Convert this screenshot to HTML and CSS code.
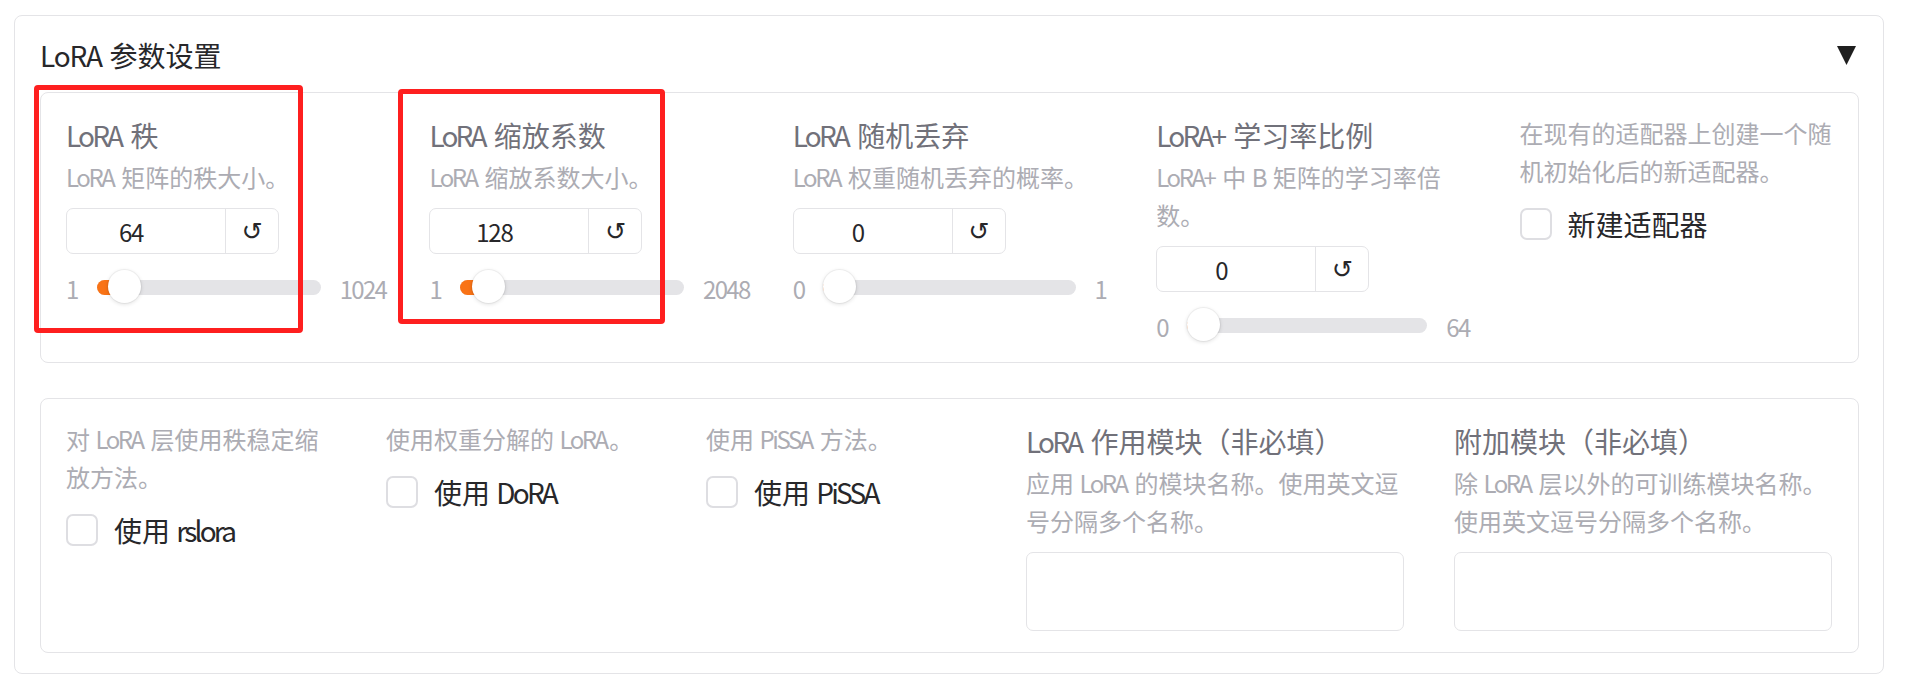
FILE: index.html
```html
<!DOCTYPE html>
<html lang="zh-CN">
<head>
<meta charset="utf-8">
<title>LoRA 参数设置</title>
<link rel="stylesheet" href="styles.css">
</head>
<body>
<div class="page">
  <div class="accordion">
    <div class="acc-head">
      <span class="acc-title"><span class="en-t">LoRA</span> 参数设置</span>
      <svg class="caret" viewBox="0 0 19 19" aria-hidden="true"><polygon points="0,0 19,0 9.5,19" fill="#1f1f1f"/></svg>
    </div>

    <div class="group">
      <div class="row row-a">
        <div class="field">
          <div class="label"><span class="en">LoRA</span> 秩</div>
          <div class="info"><span class="en">LoRA</span> 矩阵的秩大小。</div>
          <div class="num"><span class="num-val">64</span><span class="reset">↺</span></div>
          <div class="slider">
            <span class="lim">1</span>
            <div class="track" style="--p:0.0616"><div class="fill"></div><div class="thumb"></div></div>
            <span class="lim">1024</span>
          </div>
        </div>
        <div class="field">
          <div class="label"><span class="en">LoRA</span> 缩放系数</div>
          <div class="info"><span class="en">LoRA</span> 缩放系数大小。</div>
          <div class="num"><span class="num-val">128</span><span class="reset">↺</span></div>
          <div class="slider">
            <span class="lim">1</span>
            <div class="track" style="--p:0.062"><div class="fill"></div><div class="thumb"></div></div>
            <span class="lim">2048</span>
          </div>
        </div>
        <div class="field">
          <div class="label"><span class="en">LoRA</span> 随机丢弃</div>
          <div class="info"><span class="en">LoRA</span> 权重随机丢弃的概率。</div>
          <div class="num"><span class="num-val">0</span><span class="reset">↺</span></div>
          <div class="slider">
            <span class="lim">0</span>
            <div class="track" style="--p:0"><div class="fill"></div><div class="thumb"></div></div>
            <span class="lim">1</span>
          </div>
        </div>
        <div class="field">
          <div class="label"><span class="en">LoRA+</span> 学习率比例</div>
          <div class="info"><span class="en">LoRA+</span> 中 <span class="en">B</span> 矩阵的学习率倍数。</div>
          <div class="num"><span class="num-val">0</span><span class="reset">↺</span></div>
          <div class="slider">
            <span class="lim">0</span>
            <div class="track" style="--p:0"><div class="fill"></div><div class="thumb"></div></div>
            <span class="lim">64</span>
          </div>
        </div>
        <div class="field">
          <div class="info">在现有的适配器上创建一个随机初始化后的新适配器。</div>
          <label class="check"><span class="box"></span><span class="check-label">新建适配器</span></label>
        </div>
      </div>
    </div>

    <div class="group group-b">
      <div class="row row-b">
        <div class="field">
          <div class="info">对 <span class="en">LoRA</span> 层使用秩稳定缩放方法。</div>
          <label class="check"><span class="box"></span><span class="check-label">使用 <span class="en">rslora</span></span></label>
        </div>
        <div class="field">
          <div class="info">使用权重分解的 <span class="en">LoRA</span>。</div>
          <label class="check"><span class="box"></span><span class="check-label">使用 <span class="en">DoRA</span></span></label>
        </div>
        <div class="field">
          <div class="info">使用 <span class="en">PiSSA</span> 方法。</div>
          <label class="check"><span class="box"></span><span class="check-label">使用 <span class="en">PiSSA</span></span></label>
        </div>
        <div class="field">
          <div class="label"><span class="en">LoRA</span> 作用模块（非必填）</div>
          <div class="info">应用 <span class="en">LoRA</span> 的模块名称。使用英文逗号分隔多个名称。</div>
          <div class="textbox"></div>
        </div>
        <div class="field">
          <div class="label">附加模块（非必填）</div>
          <div class="info">除 <span class="en">LoRA</span> 层以外的可训练模块名称。使用英文逗号分隔多个名称。</div>
          <div class="textbox"></div>
        </div>
      </div>
    </div>
  </div>

  <div class="mark mark-1"></div>
  <div class="mark mark-2"></div>
</div>
</body>
</html>
```

FILE: styles.css
```css
html, body {
  margin: 0;
  padding: 0;
  background: #ffffff;
}

body {
  font-family: "Noto Sans CJK SC", "Noto Sans", "DejaVu Sans", sans-serif;
  color: #27272a;
}

.page {
  position: relative;
  padding: 15px 0 0 14px;
}

.en {
  letter-spacing: -0.1em;
  padding-right: 0.1em;
}

.en-t {
  letter-spacing: -0.04em;
  padding-right: 0.04em;
}

.accordion {
  width: 1870px;
  box-sizing: border-box;
  border: 1px solid #e4e4e7;
  border-radius: 8px;
  padding: 18px 24px 20px 25px;
}

.acc-head {
  display: flex;
  align-items: center;
  justify-content: space-between;
  height: 42px;
  margin-bottom: 16px;
}

.acc-title {
  font-size: 28px;
  line-height: 42px;
  color: #27272a;
}

.caret {
  width: 19px;
  height: 19px;
  margin-right: 3px;
  margin-top: 1px;
}

.group {
  border: 1px solid #e4e4e7;
  border-radius: 8px;
  padding: 21px 25px 20px 25px;
}

.group + .group {
  margin-top: 35px;
}

.group-b {
  padding-bottom: 21px;
}

.row {
  display: grid;
  column-gap: 50px;
  align-items: start;
}

.row-a {
  grid-template-columns: repeat(5, minmax(0, 1fr));
}

.row-b {
  grid-template-columns: 270px 270px 270px 378px 378px;
}

.field {
  min-width: 0;
}

.label {
  font-size: 28px;
  line-height: 42px;
  color: #71717a;
}

.info {
  font-size: 24px;
  line-height: 38px;
  color: #acacb3;
  margin-top: 2px;
}

.field > .info:first-child {
  margin-top: 0;
}

.num {
  display: flex;
  width: 213px;
  height: 46px;
  box-sizing: border-box;
  border: 1px solid #e4e4e7;
  border-radius: 7px;
  margin-top: 12px;
}

.num-val {
  flex: 0 0 159px;
  box-sizing: border-box;
  padding-right: 30px;
  display: flex;
  align-items: center;
  justify-content: center;
  font-size: 24px;
  letter-spacing: -0.05em;
  color: #27272a;
  border-right: 1px solid #e4e4e7;
}

.reset {
  flex: 1;
  display: flex;
  align-items: center;
  justify-content: center;
  font-family: "DejaVu Sans", sans-serif;
  font-size: 25px;
  line-height: 1;
  color: #27272a;
}

.slider {
  display: flex;
  align-items: center;
  gap: 19px;
  height: 33px;
  margin-top: 17px;
}

.lim {
  font-size: 24px;
  line-height: 1;
  letter-spacing: -0.07em;
  color: #acacb3;
  flex: 0 0 auto;
  margin-top: 3px;
}

.track {
  position: relative;
  flex: 1 0 224px;
  height: 15px;
  background: #e4e4e7;
  border-radius: 8px;
}

.fill {
  position: absolute;
  left: 0;
  top: 0;
  bottom: 0;
  width: calc((100% - 33px) * var(--p) + 16.5px);
  background: #f97316;
  border-radius: 8px 0 0 8px;
}

.thumb {
  position: absolute;
  top: 50%;
  left: calc((100% - 33px) * var(--p));
  width: 33px;
  height: 33px;
  margin-top: -17.5px;
  border-radius: 50%;
  background: #ffffff;
  box-shadow: 0 0 0 1px rgba(0, 0, 0, 0.04), 0 1px 4px rgba(0, 0, 0, 0.14);
}

.check {
  display: flex;
  align-items: center;
  gap: 16px;
  height: 42px;
  margin-top: 13px;
}

.box {
  width: 32px;
  height: 32px;
  box-sizing: border-box;
  border: 2px solid #dedee2;
  border-radius: 7px;
  background: #ffffff;
  flex: 0 0 auto;
}

.check-label {
  font-size: 28px;
  line-height: 42px;
  color: #27272a;
}

.textbox {
  margin-top: 12px;
  height: 79px;
  box-sizing: border-box;
  border: 1px solid #e4e4e7;
  border-radius: 7px;
  background: #ffffff;
}

.mark {
  position: absolute;
  box-sizing: border-box;
  border: 5px solid #fe1f1f;
  border-radius: 4px;
  pointer-events: none;
}

.mark-1 {
  left: 34px;
  top: 85px;
  width: 269px;
  height: 248px;
}

.mark-2 {
  left: 398px;
  top: 89px;
  width: 267px;
  height: 235px;
}
```
